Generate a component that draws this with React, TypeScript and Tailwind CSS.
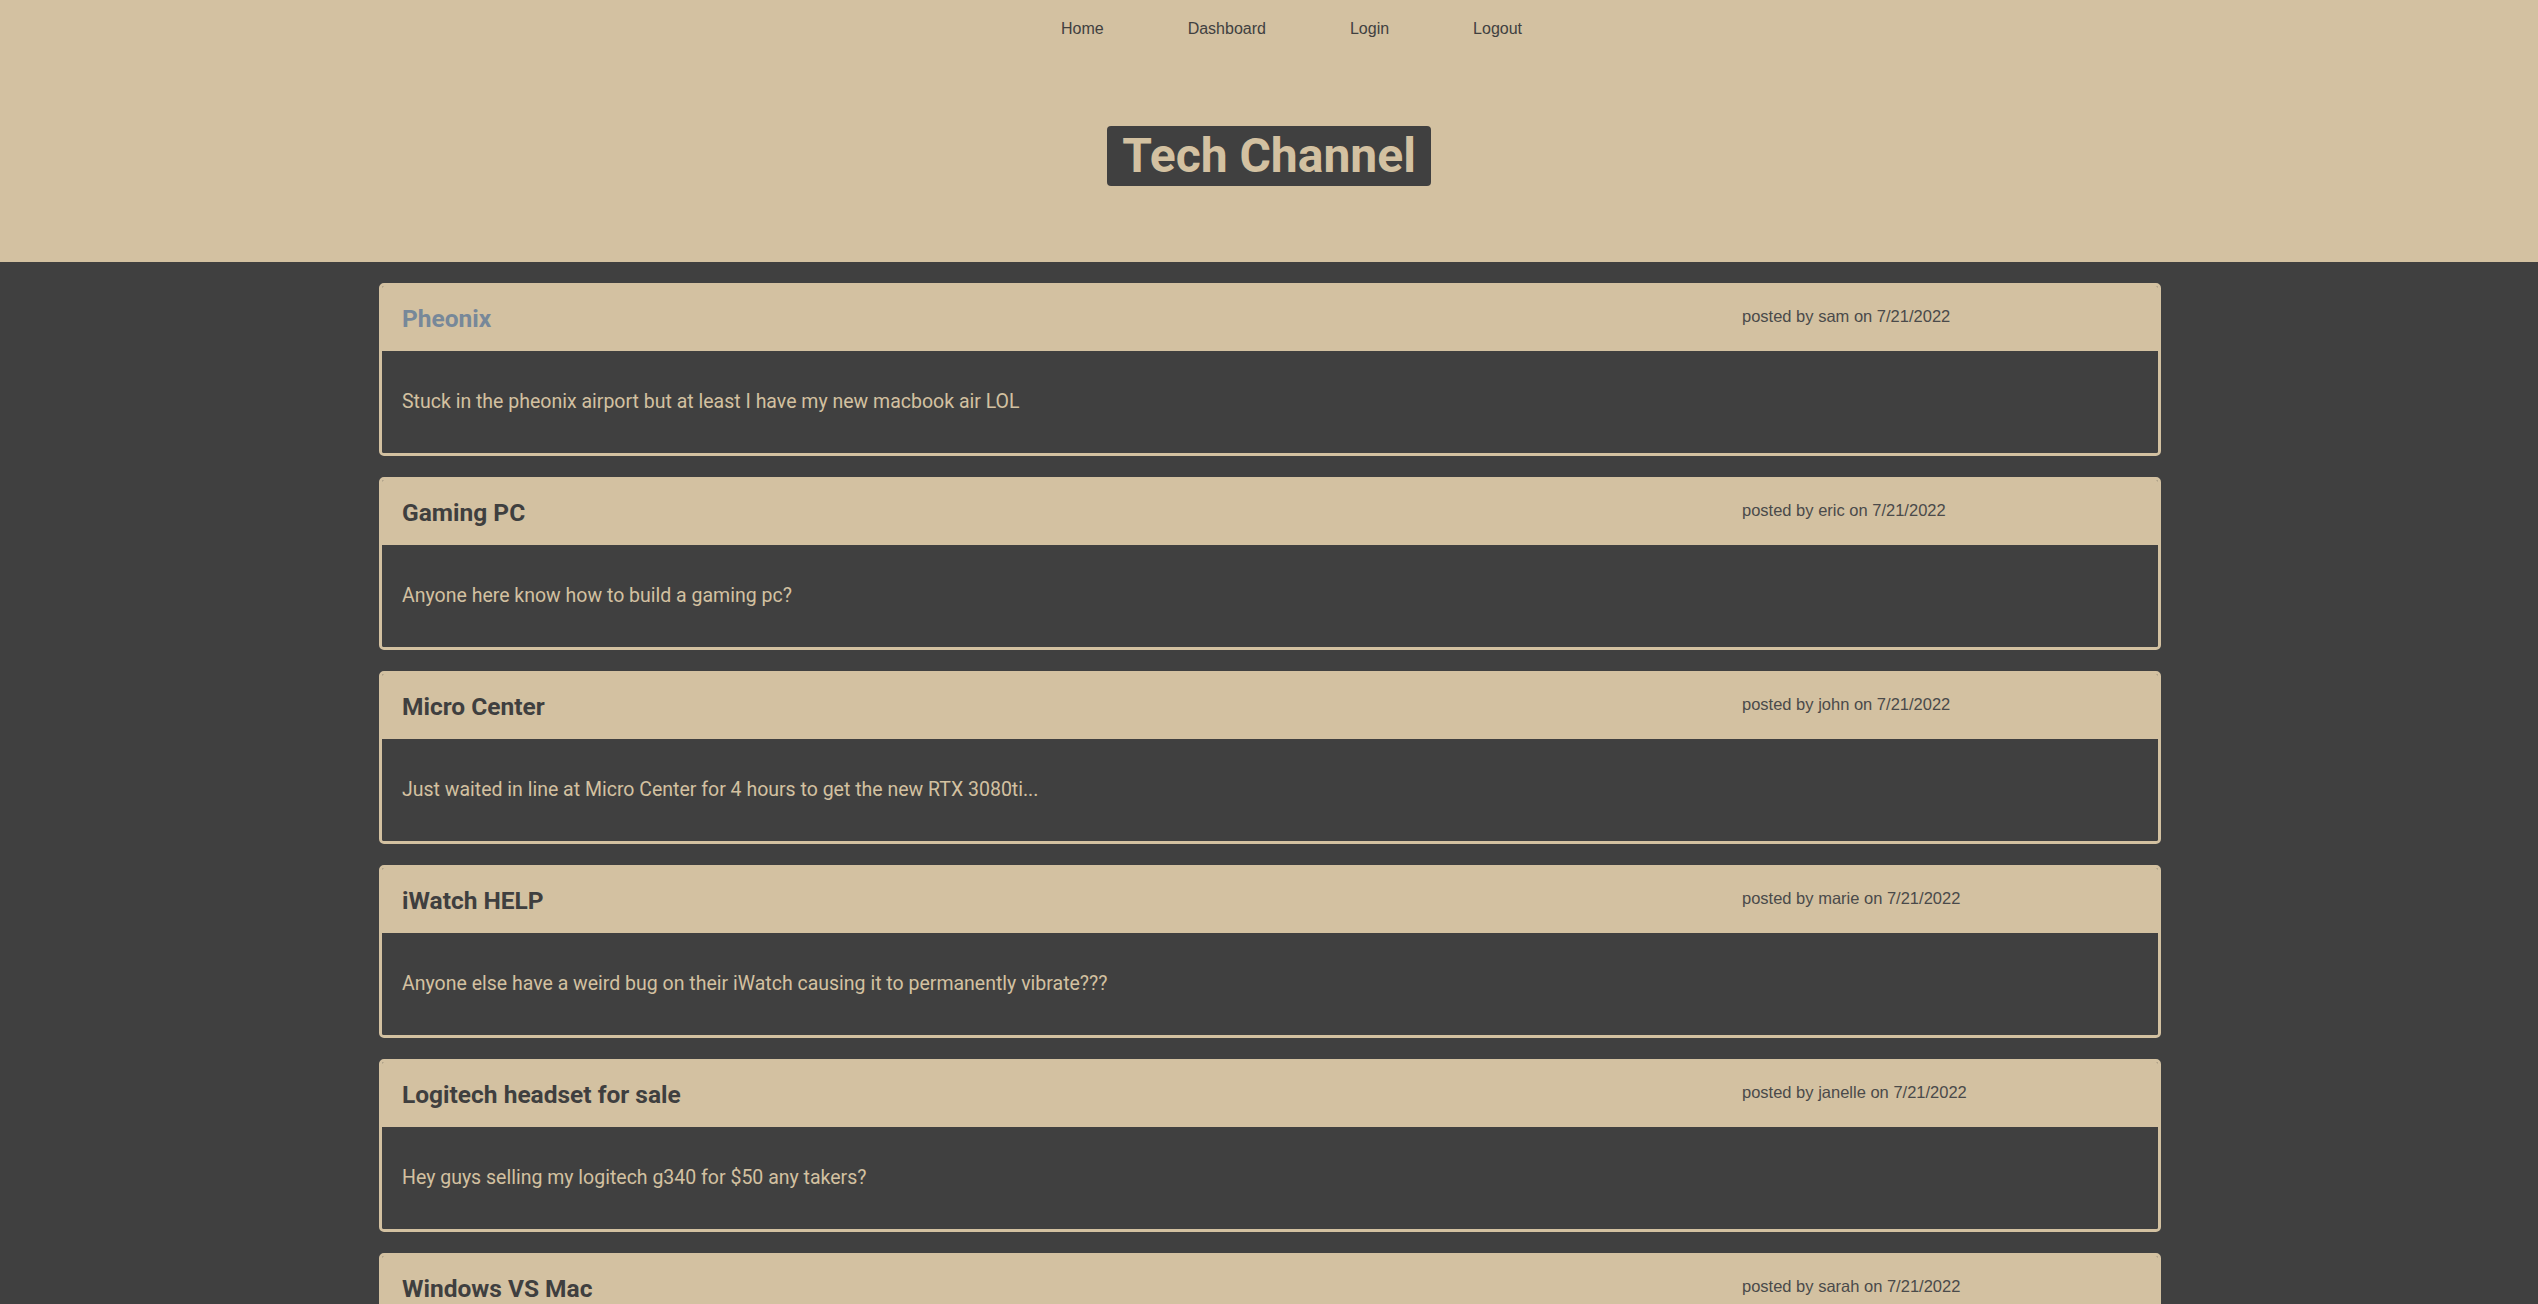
const posts = [
  { title: "Pheonix", user: "sam", body: "Stuck in the pheonix airport but at least I have my new macbook air LOL", hover: true },
  { title: "Gaming PC", user: "eric", body: "Anyone here know how to build a gaming pc?" },
  { title: "Micro Center", user: "john", body: "Just waited in line at Micro Center for 4 hours to get the new RTX 3080ti..." },
  { title: "iWatch HELP", user: "marie", body: "Anyone else have a weird bug on their iWatch causing it to permanently vibrate???" },
  { title: "Logitech headset for sale", user: "janelle", body: "Hey guys selling my logitech g340 for $50 any takers?" },
  { title: "Windows VS Mac", user: "sarah", body: "Which one do you guys prefer for everyday use?" },
];

function PostCard({ title, user, body, hover }: { title: string; user: string; body: string; hover?: boolean }) {
  return (
    <article className="w-[1782px] ml-[379px] border-[3px] border-[#d3c1a1] rounded-[5px] overflow-hidden">
      <header className="h-[65px] bg-[#d3c1a1] flex items-center pl-[20px]">
        <h2
          className={`w-[1340px] text-[24.5px] font-bold leading-8 font-['Roboto',sans-serif] ${
            hover ? "text-[#778899]" : "text-[#3f3f3f]"
          }`}
        >
          {title}
        </h2>
        <p className="text-[16.5px] leading-5 mb-[5px] text-[#4a4a4a] font-['Liberation_Sans',Arial,sans-serif]">
          posted by {user} on 7/21/2022
        </p>
      </header>
      <div className="h-[102px] flex items-center pl-[20px] bg-[#404040]">
        <p className="text-[19.5px] text-[#d3c1a1] font-['Roboto',sans-serif]">{body}</p>
      </div>
    </article>
  );
}

export default function App() {
  return (
    <div className="min-h-screen bg-[#404040]">
      {/* Top header */}
      <div className="h-[262px] bg-[#d3c1a1] flex flex-col items-center">
        <nav className="pt-[19px] pl-[45px] flex gap-[84px] text-[16px] leading-5 text-[#404040] font-['Liberation_Sans',Arial,sans-serif]">
          <a href="#">Home</a>
          <a href="#">Dashboard</a>
          <a href="#">Login</a>
          <a href="#">Logout</a>
        </nav>
        <h1 className="mt-[87px] bg-[#404040] text-[#d3c1a1] rounded-[4px] px-[15px] py-[6px] text-[48px] leading-[48px] font-bold font-['Roboto',sans-serif]">
          Tech Channel
        </h1>
      </div>

      {/* Posts */}
      <main className="pt-[21px] pb-[21px] flex flex-col gap-[21px]">
        {posts.map((p) => (
          <PostCard key={p.title} {...p} />
        ))}
      </main>
    </div>
  );
}
